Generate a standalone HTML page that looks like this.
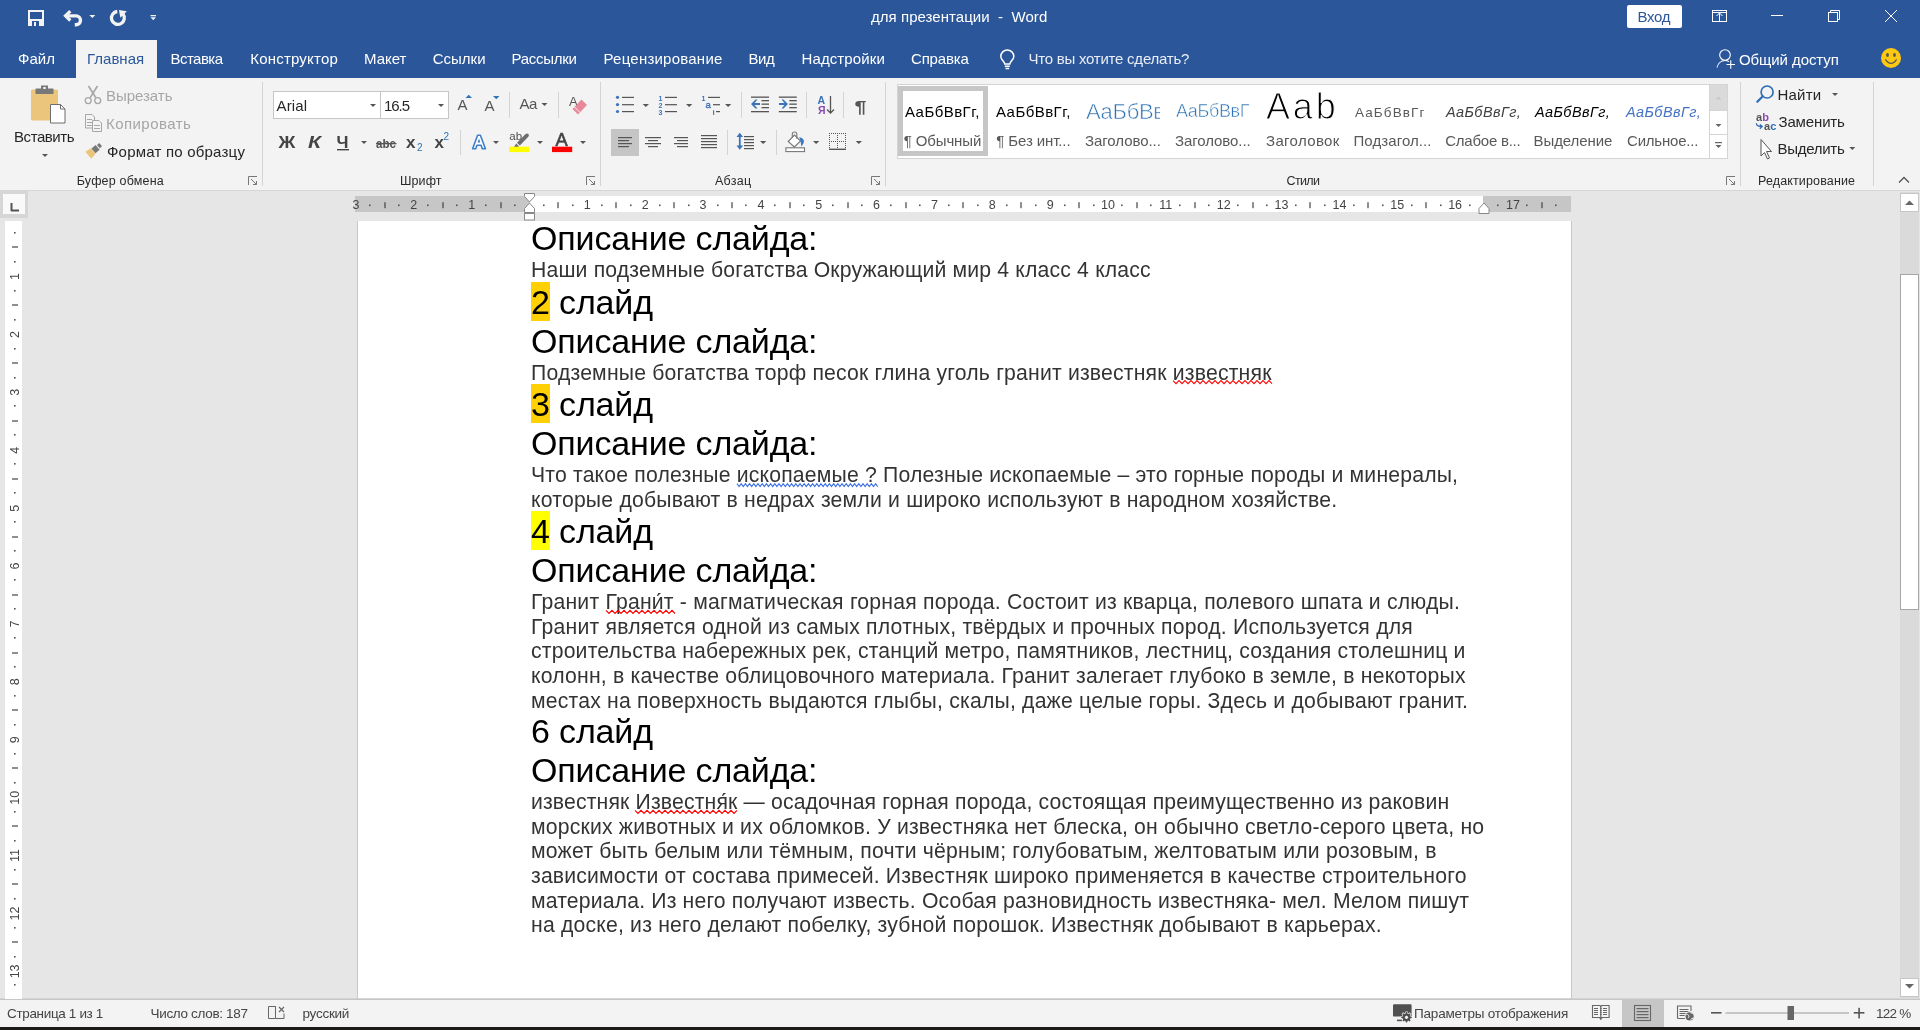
<!DOCTYPE html>
<html><head><meta charset="utf-8">
<style>
*{margin:0;padding:0;box-sizing:border-box}
html,body{width:1920px;height:1030px;overflow:hidden;background:#e6e6e6;font-family:"Liberation Sans",sans-serif}
.a{position:absolute;white-space:pre}
#title{left:0;top:0;width:1920px;height:40px;background:#2b579a}
#tabs{left:0;top:40px;width:1920px;height:38px;background:#2b579a}
#ribbon{left:0;top:78px;width:1920px;height:113px;background:#f3f3f3;border-bottom:1px solid #d5d5d5}
#status{left:0;top:998px;width:1920px;height:29px;background:#f3f3f3;border-top:1px solid #d4d4d4}
#strip{left:0;top:1027px;width:1920px;height:3px;background:#1c1a17}
#page{left:358px;top:221px;width:1213px;height:778px;background:#fff}
.h{font-size:34px;line-height:40px;left:531px;color:#000;letter-spacing:-0.15px}
.b{font-size:21.2px;line-height:25px;left:531px;color:#333}
u{text-decoration:none;position:relative}
u.wr{}
u.wb{}
</style></head><body>
<div class="a" id="title"></div>
<div class="a" id="tabs"></div>
<div class="a" id="ribbon"></div>
<div class="a" id="page"></div>
<div class="a" id="status"></div>
<div class="a" id="strip"></div>
<div class="a" style="left:0;top:0;width:1920px;height:1030px;will-change:transform">
<div class="a h" style="top:218px">Описание слайда:</div>
<div class="a b" id="L1" style="top:257px;letter-spacing:0.174px">Наши подземные богатства Окружающий мир 4 класс 4 класс</div>
<div class="a" style="left:531px;top:282px;width:19px;height:39px;background:#ffd105"></div>
<div class="a h" style="top:282px">2 слайд</div>
<div class="a h" style="top:321px">Описание слайда:</div>
<div class="a b" id="L4" style="top:360px;letter-spacing:0.191px">Подземные богатства торф песок глина уголь гранит известняк <u class="wr">известняк</u></div>
<div class="a" style="left:531px;top:384px;width:19px;height:39px;background:#ffd105"></div>
<div class="a h" style="top:384px">3 слайд</div>
<div class="a h" style="top:423px">Описание слайда:</div>
<div class="a b" id="L7" style="top:462px;letter-spacing:0.183px">Что такое полезные <u class="wb">ископаемые ?</u> Полезные ископаемые – это горные породы и минералы,</div>
<div class="a b" id="L8" style="top:487px;letter-spacing:0.203px">которые добывают в недрах земли и широко используют в народном хозяйстве.</div>
<div class="a" style="left:531px;top:511px;width:19px;height:39px;background:#ffff00"></div>
<div class="a h" style="top:511px">4 слайд</div>
<div class="a h" style="top:550px">Описание слайда:</div>
<div class="a b" id="L11" style="top:589px;letter-spacing:0.206px">Гранит <u class="wr">Грани́т</u> - магматическая горная порода. Состоит из кварца, полевого шпата и слюды.</div>
<div class="a b" id="L12" style="top:614px;letter-spacing:0.212px">Гранит является одной из самых плотных, твёрдых и прочных пород. Используется для</div>
<div class="a b" id="L13" style="top:638px;letter-spacing:0.186px">строительства набережных рек, станций метро, памятников, лестниц, создания столешниц и</div>
<div class="a b" id="L14" style="top:663px;letter-spacing:0.207px">колонн, в качестве облицовочного материала. Гранит залегает глубоко в земле, в некоторых</div>
<div class="a b" id="L15" style="top:688px;letter-spacing:0.204px">местах на поверхность выдаются глыбы, скалы, даже целые горы. Здесь и добывают гранит.</div>
<div class="a h" style="top:711px">6 слайд</div>
<div class="a h" style="top:750px">Описание слайда:</div>
<div class="a b" id="L18" style="top:789px;letter-spacing:0.159px">известняк <u class="wr">Известня́к</u> — осадочная горная порода, состоящая преимущественно из раковин</div>
<div class="a b" id="L19" style="top:814px;letter-spacing:0.191px">морских животных и их обломков. У известняка нет блеска, он обычно светло-серого цвета, но</div>
<div class="a b" id="L20" style="top:838px;letter-spacing:0.209px">может быть белым или тёмным, почти чёрным; голубоватым, желтоватым или розовым, в</div>
<div class="a b" id="L21" style="top:863px;letter-spacing:0.18px">зависимости от состава примесей. Известняк широко применяется в качестве строительного</div>
<div class="a b" id="L22" style="top:888px;letter-spacing:0.167px">материала. Из него получают известь. Особая разновидность известняка- мел. Мелом пишут</div>
<div class="a b" id="L23" style="top:912px;letter-spacing:0.195px">на доске, из него делают побелку, зубной порошок. Известняк добывают в карьерах.</div>
<svg class="a" style="left:0;top:0" width="1920" height="1030"><polyline points="1173.00,380.6 1176.00,383.6 1179.00,380.6 1182.00,383.6 1185.00,380.6 1188.00,383.6 1191.00,380.6 1194.00,383.6 1197.00,380.6 1200.00,383.6 1203.00,380.6 1206.00,383.6 1209.00,380.6 1212.00,383.6 1215.00,380.6 1218.00,383.6 1221.00,380.6 1224.00,383.6 1227.00,380.6 1230.00,383.6 1233.00,380.6 1236.00,383.6 1239.00,380.6 1242.00,383.6 1245.00,380.6 1248.00,383.6 1251.00,380.6 1254.00,383.6 1257.00,380.6 1260.00,383.6 1263.00,380.6 1266.00,383.6 1269.00,380.6 1272.00,383.6" fill="none" stroke="#f00" stroke-width="1.1"/><polyline points="737.00,483.6 739.10,486.6 741.20,483.6 743.30,486.6 745.40,483.6 747.50,486.6 749.60,483.6 751.70,486.6 753.80,483.6 755.90,486.6 758.00,483.6 760.10,486.6 762.20,483.6 764.30,486.6 766.40,483.6 768.50,486.6 770.60,483.6 772.70,486.6 774.80,483.6 776.90,486.6 779.00,483.6 781.10,486.6 783.20,483.6 785.30,486.6 787.40,483.6 789.50,486.6 791.60,483.6 793.70,486.6 795.80,483.6 797.90,486.6 800.00,483.6 802.10,486.6 804.20,483.6 806.30,486.6 808.40,483.6 810.50,486.6 812.60,483.6 814.70,486.6 816.80,483.6 818.90,486.6 821.00,483.6 823.10,486.6 825.20,483.6 827.30,486.6 829.40,483.6 831.50,486.6 833.60,483.6 835.70,486.6 837.80,483.6 839.90,486.6 842.00,483.6 844.10,486.6 846.20,483.6 848.30,486.6 850.40,483.6 852.50,486.6 854.60,483.6 856.70,486.6 858.80,483.6 860.90,486.6 863.00,483.6 865.10,486.6 867.20,483.6 869.30,486.6 871.40,483.6 873.50,486.6 875.60,483.6 877.70,486.6" fill="none" stroke="#3b6fe6" stroke-width="1.1"/><polyline points="606.00,610.3 609.00,613.5 612.00,610.3 615.00,613.5 618.00,610.3 621.00,613.5 624.00,610.3 627.00,613.5 630.00,610.3 633.00,613.5 636.00,610.3 639.00,613.5 642.00,610.3 645.00,613.5 648.00,610.3 651.00,613.5 654.00,610.3 657.00,613.5 660.00,610.3 663.00,613.5 666.00,610.3 669.00,613.5 672.00,610.3 675.00,613.5" fill="none" stroke="#f00" stroke-width="1.1"/><polyline points="635.00,810.3 638.00,813.5 641.00,810.3 644.00,813.5 647.00,810.3 650.00,813.5 653.00,810.3 656.00,813.5 659.00,810.3 662.00,813.5 665.00,810.3 668.00,813.5 671.00,810.3 674.00,813.5 677.00,810.3 680.00,813.5 683.00,810.3 686.00,813.5 689.00,810.3 692.00,813.5 695.00,810.3 698.00,813.5 701.00,810.3 704.00,813.5 707.00,810.3 710.00,813.5 713.00,810.3 716.00,813.5 719.00,810.3 722.00,813.5 725.00,810.3 728.00,813.5 731.00,810.3 734.00,813.5 737.00,810.3" fill="none" stroke="#f00" stroke-width="1.1"/></svg>
</div>
<div class="a" style="left:0;top:0;width:1920px;height:1030px;will-change:transform">
<!-- active tab -->
<div class="a" style="left:76px;top:40px;width:81px;height:38px;background:#f3f3f3"></div>
<!-- ribbon bottom border -->
<div class="a" style="left:0;top:190px;width:1920px;height:1px;background:#d6d6d6"></div>
<!-- status bar border -->
<div class="a" style="left:0;top:999px;width:1920px;height:1px;background:#c6c6c6"></div>
<!-- QAT icons -->
<svg class="a" style="left:0;top:0" width="200" height="40">
 <g fill="#f3f3f3">
  <path d="M28 10h16v16h-16z M30 12v7h12v-7z M32 21v5h7v-5z M34 22v4h2v-4z" fill-rule="evenodd"/>
 </g>
 <path d="M66.5 15.85H76A4.45 4.45 0 0 1 76 24.75H74.8" stroke="#f3f3f3" stroke-width="3.4" fill="none"/>
 <path d="M70.3 11.2L65.5 15.85L70.3 20.5" stroke="#f3f3f3" stroke-width="3.2" fill="none"/>
 <path d="M89.3 15h6l-3 3z" fill="#f3f3f3"/>
 <path d="M117.3 11.5A6.45 6.45 0 1 0 122.84 13.8" stroke="#f3f3f3" stroke-width="3.3" fill="none"/>
 <path d="M119 10L126.8 11.2L120.3 17.8Z" fill="#f3f3f3"/>
 <path d="M150.5 15h5.5v1.2h-5.5z M150.5 17.3h5.5l-2.75 3z" fill="#f3f3f3"/>
</svg>
<!-- Vhod button -->
<div class="a" style="left:1627px;top:5px;width:55px;height:23px;background:#fff;border-radius:2px"></div>
<!-- window controls -->
<svg class="a" style="left:1700px;top:0" width="220" height="40">
 <g fill="none" stroke="#fff" stroke-width="1">
  <rect x="12.5" y="10.5" width="14" height="11"/>
  <path d="M13 12.5h13"/>
  <path d="M19.5 13v8 M16.5 16l3-3 3 3"/>
  <path d="M71 15.5h12"/>
  <rect x="128.5" y="12.5" width="9" height="9"/>
  <path d="M130.5 12.5v-2h9v9h-2"/>
  <path d="M185 10l12 12 M197 10l-12 12"/>
 </g>
</svg>
<!-- share icon & smiley -->
<svg class="a" style="left:1710px;top:42px" width="210" height="36">
 <g fill="none" stroke="#fff" stroke-width="1.1">
  <circle cx="15" cy="13" r="5.3"/>
  <path d="M7 25.5 C8 21 11.5 18.5 15 18.5 C16.5 18.5 18 19 19 19.6"/>
  <path d="M16.5 22.5h8.5 M20.75 18.3v8.5"/>
 </g>
 <circle cx="181" cy="16" r="10" fill="#fcc812"/>
 <ellipse cx="177.5" cy="13" rx="1.4" ry="2" fill="#555"/>
 <ellipse cx="184.5" cy="13" rx="1.4" ry="2" fill="#555"/>
 <path d="M175.4 17.3 Q181 25.4 186.6 17.3" stroke="#555" stroke-width="1.2" fill="none"/>
</svg>
<!-- lightbulb -->
<svg class="a" style="left:995px;top:46px" width="26" height="28">
 <g fill="none" stroke="#fff" stroke-width="1.5">
  <path d="M9.8 18 C9.8 15.3 5.8 13.8 5.8 10.5 A6.5 6.5 0 0 1 18.8 10.5 C18.8 13.8 14.8 15.3 14.8 18 Z"/>
  <path d="M9.8 20.3h5 M10.5 22.4h3.6"/>
 </g>
</svg>

<!-- group separators -->
<div class="a" style="left:262px;top:82px;width:1px;height:104px;background:#d4d4d4"></div>
<div class="a" style="left:600px;top:82px;width:1px;height:104px;background:#d4d4d4"></div>
<div class="a" style="left:885px;top:82px;width:1px;height:104px;background:#d4d4d4"></div>
<div class="a" style="left:1740px;top:82px;width:1px;height:104px;background:#d4d4d4"></div>
<div class="a" style="left:1873px;top:82px;width:1px;height:104px;background:#d4d4d4"></div>
<!-- dialog launchers -->
<svg class="a" style="left:0;top:170px" width="1920" height="20">
 <g fill="none" stroke="#777" stroke-width="1">
  <path d="M248.5 15V6.5H257"/><path d="M251 9l5.5 5.5 M256.5 11v3.5H253"/>
  <path d="M586.5 15V6.5H595"/><path d="M589 9l5.5 5.5 M594.5 11v3.5H591"/>
  <path d="M871.5 15V6.5H880"/><path d="M874 9l5.5 5.5 M879.5 11v3.5H876"/>
  <path d="M1726.5 15V6.5H1735"/><path d="M1729 9l5.5 5.5 M1734.5 11v3.5H1731"/>
  <path d="M1899 12.5l5-5 5 5" stroke="#555" stroke-width="1.3"/>
 </g>
</svg>
<!-- clipboard icons -->
<svg class="a" style="left:0;top:78px" width="262" height="100">
 <rect x="31" y="11.5" width="27" height="31" rx="1.5" fill="#ebc57b"/>
 <rect x="35.5" y="10.5" width="18" height="5.5" rx="0.5" fill="#787878"/>
 <rect x="41" y="7.5" width="7" height="4" fill="#787878"/>
 <rect x="43.3" y="9" width="2.4" height="2" fill="#f3f3f3"/>
 <path d="M50.5 26.5h10l4.5 4.5v14h-14.5z" fill="#fff" stroke="#6d6d6d" stroke-width="1"/>
 <path d="M60.5 26.5v4.5h4.5" fill="none" stroke="#6d6d6d" stroke-width="1"/>
 <path d="M42 76l3 3 3-3z" fill="#555"/>
 <!-- scissors -->
 <g fill="none" stroke="#a6a6a6">
  <path d="M88.5 8 L95.8 19.6 M97.5 8 L90.2 19.6" stroke-width="1.7"/>
  <circle cx="88.2" cy="22.6" r="3" stroke-width="1.3"/><circle cx="97.7" cy="22.6" r="3" stroke-width="1.3"/>
 </g>
 <!-- copy -->
 <g fill="#f3f3f3" stroke="#a6a6a6" stroke-width="1">
  <path d="M85.5 36.5h6.5l2.5 2.5v11h-9z"/>
  <path d="M92.5 42.5h6.5l2.5 2.5v8.5h-9z"/>
 </g>
 <g stroke="#a6a6a6" stroke-width="1"><path d="M87 41.5h5 M87 44.5h5 M87 47.5h5 M94 47.5h6 M94 50.5h6"/></g>
 <!-- format painter -->
 <path d="M85.32 73.69 L90.92 70.24 L95.59 75.73 L91.28 80.71 Z" fill="#ebc57b"/>
 <path d="M91.47 70.43 L95.59 66.93 L99.61 71.66 L95.49 75.16 Z" fill="#787878"/>
 <path d="M97.00 67.05 L99.28 65.10 L102.01 68.30 L99.72 70.25 Z" fill="#787878"/>
</svg>
<!-- font boxes -->
<div class="a" style="left:273px;top:91px;width:108px;height:28px;background:#fff;border:1px solid #c6c6c6"></div>
<div class="a" style="left:380px;top:91px;width:69px;height:28px;background:#fff;border:1px solid #c6c6c6"></div>
<svg class="a" style="left:265px;top:78px" width="340" height="100">
 <g fill="#555">
  <path d="M105 26h6l-3 3z"/><path d="M173 26h6l-3 3z"/>
  <path d="M96 63h6l-3 3z"/>
  <path d="M228 63h6l-3 3z"/><path d="M272 63h6l-3 3z"/><path d="M315 63h6l-3 3z"/>
  <path d="M276.5 25h6l-3 3z"/>
 </g>
 <!-- B I U -->
 <g transform="translate(-265,-78)" font-family="Liberation Sans" font-weight="bold" fill="#444">
  <text x="278.6" y="148" font-size="17" textLength="16.8" lengthAdjust="spacingAndGlyphs">Ж</text>
  <text x="308" y="148" font-size="17" font-style="italic" textLength="13" lengthAdjust="spacingAndGlyphs">К</text>
  <text x="336.6" y="148" font-size="17" textLength="12" lengthAdjust="spacingAndGlyphs">Ч</text>
  <text x="376" y="148" font-size="12.5" fill="#555" textLength="20" lengthAdjust="spacingAndGlyphs">abc</text>
  <text x="406" y="148" font-size="17">x</text>
  <text x="434.4" y="148" font-size="17">x</text>
  <text x="417" y="150.6" font-size="10" font-weight="normal" fill="#2e75b6">2</text>
  <text x="443.5" y="139.8" font-size="10" font-weight="normal" fill="#2e75b6">2</text>
 </g>
 <rect x="72" y="71" width="12" height="1.4" fill="#444"/>
 <rect x="111" y="65" width="20.5" height="1.3" fill="#555"/>
 <rect x="195" y="52" width="1" height="25" fill="#d4d4d4"/>
 <!-- grow/shrink -->
 <text x="457.5" y="110.2" transform="translate(-265,-78)" font-family="Liberation Sans" font-size="15" fill="#555">A</text>
 <path d="M200.5 20h6.5l-3.25-3.2z" fill="#2e75b6"/>
 <text x="484.5" y="111.2" transform="translate(-265,-78)" font-family="Liberation Sans" font-size="15" fill="#555">A</text>
 <path d="M228 18h6.5l-3.25 3.2z" fill="#2e75b6"/>
 <rect x="244" y="14" width="1" height="26" fill="#d4d4d4"/>
 <text x="519.5" y="109" transform="translate(-265,-78)" font-family="Liberation Sans" font-size="15" fill="#555" letter-spacing="-0.5">Aa</text>
 <rect x="293" y="14" width="1" height="26" fill="#d4d4d4"/>
 <!-- clear formatting -->
 <text x="569" y="105.6" transform="translate(-265,-78)" font-family="Liberation Sans" font-size="13" fill="#555">A</text>
 <path d="M307.5 31 L316.5 21.5 L322 27 L313 36.5 Z" fill="#e8899a"/>
 <path d="M309.5 29 L315 34.5" stroke="#f3f3f3" stroke-width="1"/>
 <!-- text effects -->
 <g transform="translate(-265,-78)"><path d="M472.6 148.8 L477.6 135.3 L480.4 135.3 L485.4 148.8 L482.3 148.8 L481.1 145.2 L476.9 145.2 L475.7 148.8 Z" fill="#fff" stroke="#3f7fc7" stroke-width="1.6" stroke-linejoin="round"/><path d="M477.6 142.6 L479 138.4 L480.4 142.6 Z" fill="#3f7fc7"/></g>
 <!-- highlighter -->
 <text x="509.3" y="139.8" transform="translate(-265,-78)" font-family="Liberation Sans" font-size="11.5" fill="#505050">ab</text>
 <path d="M252 64.8 L260.6 56 Q262.2 54.8 263.4 56 Q264.5 57.3 263.3 58.7 L254.8 67.6 Z" fill="#6d6d6d"/><path d="M251.2 65.6 L254 68.4 L250.5 70.3 L248.2 70.3 Z" fill="#6d6d6d"/>
 <rect x="244" y="68.7" width="20" height="5.4" fill="#ffff00"/>
 <!-- font color -->
 <text x="555.6" y="145.8" transform="translate(-265,-78)" font-family="Liberation Sans" font-size="18" fill="#444" stroke="#444" stroke-width="0.6" textLength="12.2" lengthAdjust="spacingAndGlyphs">A</text>
 <rect x="287" y="68.7" width="20.2" height="5.4" fill="#ff0000"/>
</svg>

<!-- paragraph group -->
<svg class="a" style="left:600px;top:78px" width="285" height="100">
 <g fill="#3b73b9">
  <circle cx="617.5" cy="97.3" r="1.6" transform="translate(-600,-78)"/>
  <circle cx="617.5" cy="104.6" r="1.6" transform="translate(-600,-78)"/>
  <circle cx="617.5" cy="111.5" r="1.6" transform="translate(-600,-78)"/>
 </g>
 <g fill="#555">
  <rect x="22" y="18.8" width="12" height="1.2"/><rect x="22" y="26.1" width="12" height="1.2"/><rect x="22" y="33" width="12" height="1.2"/>
  <rect x="65" y="18.8" width="12" height="1.2"/><rect x="65" y="26.1" width="12" height="1.2"/><rect x="65" y="33" width="12" height="1.2"/>
  <rect x="108" y="18.8" width="12" height="1.2"/><rect x="113" y="26.1" width="7" height="1.2"/><rect x="116" y="33" width="4" height="1.2"/>
  <path d="M42.7 26h6.3l-3.15 3z"/><path d="M86 26h6.3l-3.15 3z"/><path d="M125 26h6.3l-3.15 3z"/>
 </g>
 <g font-family="Liberation Sans" font-weight="bold" fill="#3b73b9">
  <text x="58.5" y="22.5" font-size="7">1</text><text x="58.5" y="29.8" font-size="7">2</text><text x="58.5" y="36.8" font-size="7">3</text>
  <text x="101.5" y="22.5" font-size="7">1</text><text x="105.6" y="30" font-size="9.5" font-weight="normal" stroke="#3b73b9" stroke-width="0.4">a</text><text x="112.4" y="36.8" font-size="8">i</text>
 </g>
 <rect x="141" y="14" width="1" height="26" fill="#d4d4d4"/>
 <!-- indent -->
 <g fill="#555">
  <rect x="151" y="18.5" width="18" height="1.3"/><rect x="161.5" y="22" width="7.5" height="1.3"/><rect x="161.5" y="25.5" width="7.5" height="1.3"/><rect x="161.5" y="29" width="7.5" height="1.3"/><rect x="151" y="33" width="18" height="1.3"/>
  <rect x="178.8" y="18.5" width="18" height="1.3"/><rect x="189.3" y="22" width="7.5" height="1.3"/><rect x="189.3" y="25.5" width="7.5" height="1.3"/><rect x="189.3" y="29" width="7.5" height="1.3"/><rect x="178.8" y="33" width="18" height="1.3"/>
 </g>
 <path d="M151 26 L155.5 21.5 L157.5 21.5 L154.5 25 L160 25 L160 27 L154.5 27 L157.5 30.5 L155.5 30.5 Z" fill="#3b73b9"/>
 <path d="M188 26 L183.5 21.5 L181.5 21.5 L184.5 25 L179 25 L179 27 L184.5 27 L181.5 30.5 L183.5 30.5 Z" fill="#3b73b9"/>
 <rect x="206" y="14" width="1" height="26" fill="#d4d4d4"/>
 <!-- sort -->
 <text x="217.5" y="25.7" font-family="Liberation Sans" font-weight="bold" font-size="10.5" fill="#3b73b9">A</text>
 <text x="218" y="35.6" font-family="Liberation Sans" font-weight="bold" font-size="10.5" fill="#8a4ab2">Я</text>
 <path d="M230.5 18v17 M227 31.5l3.5 3.5 3.5-3.5" stroke="#555" stroke-width="1.3" fill="none"/>
 <rect x="243" y="14" width="1" height="26" fill="#d4d4d4"/>
 <!-- pilcrow -->
 <text x="854.5" y="112.5" transform="translate(-600,-78)" font-family="Liberation Sans" font-weight="bold" font-size="17" fill="#555" textLength="12" lengthAdjust="spacingAndGlyphs">¶</text>
 <!-- align buttons -->
 <rect x="11" y="51" width="28" height="27" fill="#c5c5c5"/>
 <g fill="#555">
  <rect x="18" y="59" width="14" height="1.2"/><rect x="18" y="62" width="11" height="1.2"/><rect x="18" y="65" width="14" height="1.2"/><rect x="18" y="68" width="11" height="1.2"/>
  <rect x="45" y="59" width="16" height="1.2"/><rect x="48" y="62" width="10" height="1.2"/><rect x="45" y="65" width="16" height="1.2"/><rect x="48" y="68" width="10" height="1.2"/>
  <rect x="74" y="59" width="14" height="1.2"/><rect x="77" y="62" width="11" height="1.2"/><rect x="74" y="65" width="14" height="1.2"/><rect x="77" y="68" width="11" height="1.2"/>
  <rect x="101" y="57" width="16" height="1.2"/><rect x="101" y="60" width="16" height="1.2"/><rect x="101" y="63" width="16" height="1.2"/><rect x="101" y="66" width="16" height="1.2"/><rect x="101" y="69" width="16" height="1.2"/>
 </g>
 <rect x="127" y="52" width="1" height="25" fill="#d4d4d4"/>
 <!-- line spacing -->
 <g fill="#555"><rect x="144" y="58" width="10" height="1.2"/><rect x="144" y="61" width="10" height="1.2"/><rect x="144" y="64" width="10" height="1.2"/><rect x="144" y="67" width="10" height="1.2"/><rect x="144" y="70" width="10" height="1.2"/></g>
 <path d="M139.8 56v14" stroke="#3b73b9" stroke-width="1.8"/>
 <path d="M136.5 59l3.3-4.3 3.3 4.3z M136.5 67.5l3.3 4.3 3.3-4.3z" fill="#3b73b9"/>
 <path d="M160 63h6.3l-3.15 3z" fill="#555"/>
 <rect x="176" y="52" width="1" height="25" fill="#d4d4d4"/>
 <!-- shading -->
 <path d="M188.2 63.5 L194.5 57.1 L200.6 63 L194.3 68.9 Z" fill="#fff" stroke="#777" stroke-width="1.1"/>
 <path d="M192.3 59.5V56Q192.3 54 194.6 54Q196.8 54 196.8 56V60.8" fill="none" stroke="#777" stroke-width="1.1"/>
 <path d="M199.3 59Q204.5 60.5 203.9 64Q203.2 66.8 201.4 68.4L200.6 63.2Z" fill="#3b78c4"/>
 <rect x="185.9" y="69.8" width="18.6" height="3.8" fill="#fff" stroke="#777" stroke-width="1.1"/>
 <path d="M213 63h6.3l-3.15 3z" fill="#555"/>
 <!-- borders -->
 <g fill="none" stroke="#555" stroke-width="1" stroke-dasharray="1 1">
  <path d="M229 55.5h17 M229 63.5h17 M229.5 57v13 M237.5 57v13 M245.5 57v13"/>
 </g>
 <rect x="229" y="70.6" width="17" height="1.4" fill="#555"/>
 <path d="M255.7 63h6.3l-3.15 3z" fill="#555"/>
</svg>

<!-- styles gallery -->
<div class="a" style="left:897px;top:84px;width:831px;height:75px;background:#fff;border:1px solid #d4d4d4"></div>
<div class="a" style="left:898px;top:86px;width:90px;height:70px;border:5px solid #c6c6c6"></div>
<div class="a" style="left:1709px;top:84px;width:19px;height:75px;border:1px solid #d4d4d4;background:#fff"></div>
<div class="a" style="left:1710px;top:85px;width:17px;height:25px;background:#dadada"></div>
<div class="a" style="left:1709px;top:110px;width:19px;height:1px;background:#d4d4d4"></div>
<div class="a" style="left:1709px;top:134px;width:19px;height:1px;background:#d4d4d4"></div>
<svg class="a" style="left:1709px;top:84px" width="19" height="75">
 <path d="M6.5 15.5h6l-3-3z" fill="#c8c8c8"/>
 <path d="M6.5 40h6l-3 3z" fill="#666"/>
 <rect x="6" y="58" width="7" height="1.2" fill="#666"/>
 <path d="M6.5 61h6l-3 3z" fill="#666"/>
</svg>
<div class="a" style="left:904px;top:92px;width:76px;height:30px;overflow:hidden">
 <div class="a" style="left:1px;top:11px;font-size:15px;line-height:17px;color:#000;letter-spacing:0.45px">АаБбВвГг,</div>
</div>
<div class="a" style="left:995px;top:92px;width:75px;height:30px;overflow:hidden">
 <div class="a" style="left:1px;top:11px;font-size:15px;line-height:17px;color:#000;letter-spacing:0.45px">АаБбВвГг,</div>
</div>
<div class="a" style="left:1085px;top:88px;width:75px;height:40px;overflow:hidden">
 <div class="a" style="left:1px;top:11px;font-size:22px;line-height:25px;color:#2e74b5;letter-spacing:-0.3px;-webkit-text-stroke:0.6px #fff">АаБбВв</div>
</div>
<div class="a" style="left:1175px;top:88px;width:75px;height:40px;overflow:hidden">
 <div class="a" style="left:1px;top:13px;font-size:18px;line-height:21px;color:#2e74b5;letter-spacing:-0.35px;-webkit-text-stroke:0.5px #fff">АаБбВвГг</div>
</div>
<div class="a" style="left:1264px;top:84px;width:80px;height:44px;overflow:hidden">
 <div class="a" style="left:2px;top:2px;font-size:36px;line-height:41px;color:#000;letter-spacing:2.8px;-webkit-text-stroke:1.1px #fff">Aab</div>
</div>
<div class="a" style="left:1354px;top:92px;width:76px;height:30px;overflow:hidden">
 <div class="a" style="left:1px;top:13px;font-size:13.5px;line-height:16px;color:#5a5a5a;letter-spacing:1.1px">АаБбВвГг</div>
</div>
<div class="a" style="left:1445px;top:92px;width:76px;height:30px;overflow:hidden">
 <div class="a" style="left:1px;top:12px;font-size:14.5px;line-height:17px;color:#404040;font-style:italic;letter-spacing:0.4px">АаБбВвГг,</div>
</div>
<div class="a" style="left:1534px;top:92px;width:78px;height:30px;overflow:hidden">
 <div class="a" style="left:1px;top:12px;font-size:14.5px;line-height:17px;color:#000;font-style:italic;letter-spacing:0.4px">АаБбВвГг,</div>
</div>
<div class="a" style="left:1625px;top:92px;width:76px;height:30px;overflow:hidden">
 <div class="a" style="left:1px;top:12px;font-size:14.5px;line-height:17px;color:#4472c4;font-style:italic;letter-spacing:0.4px">АаБбВвГг,</div>
</div>
<!-- editing icons -->
<svg class="a" style="left:1750px;top:80px" width="120" height="80">
 <circle cx="17.1" cy="12" r="6" fill="none" stroke="#2e6eb5" stroke-width="1.7"/>
 <path d="M12.8 16.3 L7.3 21.8" stroke="#2e6eb5" stroke-width="2.2" stroke-linecap="round"/>
 <path d="M82 13h6l-3 3z" fill="#555"/>
 <text x="6" y="40.8" font-family="Liberation Sans" font-weight="bold" font-size="11" fill="#555">a</text>
 <text x="12.2" y="40.8" font-family="Liberation Sans" font-weight="bold" font-size="11" fill="#8a4ab2">b</text>
 <text x="14" y="49.8" font-family="Liberation Sans" font-weight="bold" font-size="11" fill="#555">a</text>
 <text x="20.3" y="49.8" font-family="Liberation Sans" font-weight="bold" font-size="11" fill="#2e6eb5">c</text>
 <path d="M6.3 43.2 Q6.5 46.6 12 46.6 M9.8 44.4 L12.2 46.6 L9.8 48.8" fill="none" stroke="#2e6eb5" stroke-width="1.3"/>
 <path d="M11 59.5 L11 76 L14.5 72.5 L17.5 79 L19.5 78 L16.5 71.5 L21.5 71.5 Z" fill="#fff" stroke="#555" stroke-width="1"/>
 <path d="M99.3 67h6l-3 3z" fill="#555"/>
</svg>

<div class="a" style="left:0;top:191px;width:28px;height:27px;background:#d6d6d6"></div>
<div class="a" style="left:3px;top:194px;width:22px;height:20px;background:#f9f9f9"></div>
<svg class="a" style="left:0;top:190px" width="30" height="30"><path d="M11.5 13v8 M11 20.5h8" stroke="#555" stroke-width="2" fill="none"/></svg>
<div class="a" style="left:357px;top:221px;width:1px;height:778px;background:#c8c8c8"></div>
<div class="a" style="left:1571px;top:221px;width:1px;height:778px;background:#c8c8c8"></div>
<div class="a" style="left:355px;top:196px;width:1216px;height:16px;background:#c6c6c6"></div>
<div class="a" style="left:530px;top:196px;width:953px;height:16px;background:#fff"></div>
<svg class="a" style="left:0;top:190px" width="1920" height="32"><text x="355.95" y="19.1" text-anchor="middle" font-family="Liberation Sans" font-size="12.5" fill="#444">3</text><rect x="369" y="14.5" width="1.6" height="1.6" fill="#555"/><rect x="384.40" y="12.2" width="1.2" height="6" fill="#444"/><rect x="398" y="14.5" width="1.6" height="1.6" fill="#555"/><text x="413.80" y="19.1" text-anchor="middle" font-family="Liberation Sans" font-size="12.5" fill="#444">2</text><rect x="427" y="14.5" width="1.6" height="1.6" fill="#555"/><rect x="442.40" y="12.2" width="1.2" height="6" fill="#444"/><rect x="456" y="14.5" width="1.6" height="1.6" fill="#555"/><text x="471.65" y="19.1" text-anchor="middle" font-family="Liberation Sans" font-size="12.5" fill="#444">1</text><rect x="485" y="14.5" width="1.6" height="1.6" fill="#555"/><rect x="500.40" y="12.2" width="1.2" height="6" fill="#444"/><rect x="514" y="14.5" width="1.6" height="1.6" fill="#555"/><rect x="543" y="14.5" width="1.6" height="1.6" fill="#555"/><rect x="557.40" y="12.2" width="1.2" height="6" fill="#444"/><rect x="572" y="14.5" width="1.6" height="1.6" fill="#555"/><text x="587.35" y="19.1" text-anchor="middle" font-family="Liberation Sans" font-size="12.5" fill="#444">1</text><rect x="601" y="14.5" width="1.6" height="1.6" fill="#555"/><rect x="615.40" y="12.2" width="1.2" height="6" fill="#444"/><rect x="630" y="14.5" width="1.6" height="1.6" fill="#555"/><text x="645.20" y="19.1" text-anchor="middle" font-family="Liberation Sans" font-size="12.5" fill="#444">2</text><rect x="659" y="14.5" width="1.6" height="1.6" fill="#555"/><rect x="673.40" y="12.2" width="1.2" height="6" fill="#444"/><rect x="688" y="14.5" width="1.6" height="1.6" fill="#555"/><text x="703.05" y="19.1" text-anchor="middle" font-family="Liberation Sans" font-size="12.5" fill="#444">3</text><rect x="717" y="14.5" width="1.6" height="1.6" fill="#555"/><rect x="731.40" y="12.2" width="1.2" height="6" fill="#444"/><rect x="745" y="14.5" width="1.6" height="1.6" fill="#555"/><text x="760.90" y="19.1" text-anchor="middle" font-family="Liberation Sans" font-size="12.5" fill="#444">4</text><rect x="774" y="14.5" width="1.6" height="1.6" fill="#555"/><rect x="789.40" y="12.2" width="1.2" height="6" fill="#444"/><rect x="803" y="14.5" width="1.6" height="1.6" fill="#555"/><text x="818.75" y="19.1" text-anchor="middle" font-family="Liberation Sans" font-size="12.5" fill="#444">5</text><rect x="832" y="14.5" width="1.6" height="1.6" fill="#555"/><rect x="847.40" y="12.2" width="1.2" height="6" fill="#444"/><rect x="861" y="14.5" width="1.6" height="1.6" fill="#555"/><text x="876.60" y="19.1" text-anchor="middle" font-family="Liberation Sans" font-size="12.5" fill="#444">6</text><rect x="890" y="14.5" width="1.6" height="1.6" fill="#555"/><rect x="905.40" y="12.2" width="1.2" height="6" fill="#444"/><rect x="919" y="14.5" width="1.6" height="1.6" fill="#555"/><text x="934.45" y="19.1" text-anchor="middle" font-family="Liberation Sans" font-size="12.5" fill="#444">7</text><rect x="948" y="14.5" width="1.6" height="1.6" fill="#555"/><rect x="962.40" y="12.2" width="1.2" height="6" fill="#444"/><rect x="977" y="14.5" width="1.6" height="1.6" fill="#555"/><text x="992.30" y="19.1" text-anchor="middle" font-family="Liberation Sans" font-size="12.5" fill="#444">8</text><rect x="1006" y="14.5" width="1.6" height="1.6" fill="#555"/><rect x="1020.40" y="12.2" width="1.2" height="6" fill="#444"/><rect x="1035" y="14.5" width="1.6" height="1.6" fill="#555"/><text x="1050.15" y="19.1" text-anchor="middle" font-family="Liberation Sans" font-size="12.5" fill="#444">9</text><rect x="1064" y="14.5" width="1.6" height="1.6" fill="#555"/><rect x="1078.40" y="12.2" width="1.2" height="6" fill="#444"/><rect x="1093" y="14.5" width="1.6" height="1.6" fill="#555"/><text x="1108.00" y="19.1" text-anchor="middle" font-family="Liberation Sans" font-size="12.5" fill="#444">10</text><rect x="1121" y="14.5" width="1.6" height="1.6" fill="#555"/><rect x="1136.40" y="12.2" width="1.2" height="6" fill="#444"/><rect x="1150" y="14.5" width="1.6" height="1.6" fill="#555"/><text x="1165.85" y="19.1" text-anchor="middle" font-family="Liberation Sans" font-size="12.5" fill="#444">11</text><rect x="1179" y="14.5" width="1.6" height="1.6" fill="#555"/><rect x="1194.40" y="12.2" width="1.2" height="6" fill="#444"/><rect x="1208" y="14.5" width="1.6" height="1.6" fill="#555"/><text x="1223.70" y="19.1" text-anchor="middle" font-family="Liberation Sans" font-size="12.5" fill="#444">12</text><rect x="1237" y="14.5" width="1.6" height="1.6" fill="#555"/><rect x="1252.40" y="12.2" width="1.2" height="6" fill="#444"/><rect x="1266" y="14.5" width="1.6" height="1.6" fill="#555"/><text x="1281.55" y="19.1" text-anchor="middle" font-family="Liberation Sans" font-size="12.5" fill="#444">13</text><rect x="1295" y="14.5" width="1.6" height="1.6" fill="#555"/><rect x="1309.40" y="12.2" width="1.2" height="6" fill="#444"/><rect x="1324" y="14.5" width="1.6" height="1.6" fill="#555"/><text x="1339.40" y="19.1" text-anchor="middle" font-family="Liberation Sans" font-size="12.5" fill="#444">14</text><rect x="1353" y="14.5" width="1.6" height="1.6" fill="#555"/><rect x="1367.40" y="12.2" width="1.2" height="6" fill="#444"/><rect x="1382" y="14.5" width="1.6" height="1.6" fill="#555"/><text x="1397.25" y="19.1" text-anchor="middle" font-family="Liberation Sans" font-size="12.5" fill="#444">15</text><rect x="1411" y="14.5" width="1.6" height="1.6" fill="#555"/><rect x="1425.40" y="12.2" width="1.2" height="6" fill="#444"/><rect x="1440" y="14.5" width="1.6" height="1.6" fill="#555"/><text x="1455.10" y="19.1" text-anchor="middle" font-family="Liberation Sans" font-size="12.5" fill="#444">16</text><rect x="1469" y="14.5" width="1.6" height="1.6" fill="#555"/><rect x="1497" y="14.5" width="1.6" height="1.6" fill="#555"/><text x="1512.95" y="19.1" text-anchor="middle" font-family="Liberation Sans" font-size="12.5" fill="#444">17</text><rect x="1526" y="14.5" width="1.6" height="1.6" fill="#555"/><rect x="1541.40" y="12.2" width="1.2" height="6" fill="#444"/><rect x="1555" y="14.5" width="1.6" height="1.6" fill="#555"/><path d="M524.5 3.5h10v3l-5 5.5-5-5.5z" fill="#fff" stroke="#888" stroke-width="1"/><path d="M529.5 13l5 5.5v4h-10v-4z" fill="#fff" stroke="#888" stroke-width="1"/><rect x="524.5" y="23.5" width="10" height="6.5" fill="#fff" stroke="#888" stroke-width="1"/><path d="M1484 13l5 5.5v5h-10v-5z" fill="#fff" stroke="#888" stroke-width="1"/></svg>
<div class="a" style="left:5px;top:221px;width:17px;height:778px;background:#fff"></div>
<svg class="a" style="left:0;top:0" width="30" height="1000"><rect x="14" y="232" width="1.6" height="1.6" fill="#555"/><rect x="12" y="246.40" width="6" height="1.2" fill="#444"/><rect x="14" y="261" width="1.6" height="1.6" fill="#555"/><text x="0" y="0" transform="translate(19.3 276.60) rotate(-90)" text-anchor="middle" font-family="Liberation Sans" font-size="12.5" fill="#444">1</text><rect x="14" y="290" width="1.6" height="1.6" fill="#555"/><rect x="12" y="304.40" width="6" height="1.2" fill="#444"/><rect x="14" y="319" width="1.6" height="1.6" fill="#555"/><text x="0" y="0" transform="translate(19.3 334.50) rotate(-90)" text-anchor="middle" font-family="Liberation Sans" font-size="12.5" fill="#444">2</text><rect x="14" y="348" width="1.6" height="1.6" fill="#555"/><rect x="12" y="362.40" width="6" height="1.2" fill="#444"/><rect x="14" y="377" width="1.6" height="1.6" fill="#555"/><text x="0" y="0" transform="translate(19.3 392.40) rotate(-90)" text-anchor="middle" font-family="Liberation Sans" font-size="12.5" fill="#444">3</text><rect x="14" y="405" width="1.6" height="1.6" fill="#555"/><rect x="12" y="420.40" width="6" height="1.2" fill="#444"/><rect x="14" y="434" width="1.6" height="1.6" fill="#555"/><text x="0" y="0" transform="translate(19.3 450.30) rotate(-90)" text-anchor="middle" font-family="Liberation Sans" font-size="12.5" fill="#444">4</text><rect x="14" y="463" width="1.6" height="1.6" fill="#555"/><rect x="12" y="478.40" width="6" height="1.2" fill="#444"/><rect x="14" y="492" width="1.6" height="1.6" fill="#555"/><text x="0" y="0" transform="translate(19.3 508.20) rotate(-90)" text-anchor="middle" font-family="Liberation Sans" font-size="12.5" fill="#444">5</text><rect x="14" y="521" width="1.6" height="1.6" fill="#555"/><rect x="12" y="536.40" width="6" height="1.2" fill="#444"/><rect x="14" y="550" width="1.6" height="1.6" fill="#555"/><text x="0" y="0" transform="translate(19.3 566.10) rotate(-90)" text-anchor="middle" font-family="Liberation Sans" font-size="12.5" fill="#444">6</text><rect x="14" y="579" width="1.6" height="1.6" fill="#555"/><rect x="12" y="594.40" width="6" height="1.2" fill="#444"/><rect x="14" y="608" width="1.6" height="1.6" fill="#555"/><text x="0" y="0" transform="translate(19.3 624.00) rotate(-90)" text-anchor="middle" font-family="Liberation Sans" font-size="12.5" fill="#444">7</text><rect x="14" y="637" width="1.6" height="1.6" fill="#555"/><rect x="12" y="652.40" width="6" height="1.2" fill="#444"/><rect x="14" y="666" width="1.6" height="1.6" fill="#555"/><text x="0" y="0" transform="translate(19.3 681.90) rotate(-90)" text-anchor="middle" font-family="Liberation Sans" font-size="12.5" fill="#444">8</text><rect x="14" y="695" width="1.6" height="1.6" fill="#555"/><rect x="12" y="709.40" width="6" height="1.2" fill="#444"/><rect x="14" y="724" width="1.6" height="1.6" fill="#555"/><text x="0" y="0" transform="translate(19.3 739.80) rotate(-90)" text-anchor="middle" font-family="Liberation Sans" font-size="12.5" fill="#444">9</text><rect x="14" y="753" width="1.6" height="1.6" fill="#555"/><rect x="12" y="767.40" width="6" height="1.2" fill="#444"/><rect x="14" y="782" width="1.6" height="1.6" fill="#555"/><text x="0" y="0" transform="translate(19.3 797.70) rotate(-90)" text-anchor="middle" font-family="Liberation Sans" font-size="12.5" fill="#444">10</text><rect x="14" y="811" width="1.6" height="1.6" fill="#555"/><rect x="12" y="825.40" width="6" height="1.2" fill="#444"/><rect x="14" y="840" width="1.6" height="1.6" fill="#555"/><text x="0" y="0" transform="translate(19.3 855.60) rotate(-90)" text-anchor="middle" font-family="Liberation Sans" font-size="12.5" fill="#444">11</text><rect x="14" y="869" width="1.6" height="1.6" fill="#555"/><rect x="12" y="883.40" width="6" height="1.2" fill="#444"/><rect x="14" y="898" width="1.6" height="1.6" fill="#555"/><text x="0" y="0" transform="translate(19.3 913.50) rotate(-90)" text-anchor="middle" font-family="Liberation Sans" font-size="12.5" fill="#444">12</text><rect x="14" y="927" width="1.6" height="1.6" fill="#555"/><rect x="12" y="941.40" width="6" height="1.2" fill="#444"/><rect x="14" y="956" width="1.6" height="1.6" fill="#555"/><text x="0" y="0" transform="translate(19.3 971.40) rotate(-90)" text-anchor="middle" font-family="Liberation Sans" font-size="12.5" fill="#444">13</text><rect x="14" y="984" width="1.6" height="1.6" fill="#555"/></svg>
<div class="a" style="left:1900px;top:192px;width:19px;height:807px;background:#dadada"></div>
<div class="a" style="left:1900px;top:193px;width:19px;height:19px;background:#fff;border:1px solid #c6c6c6"></div>
<div class="a" style="left:1900px;top:978px;width:19px;height:19px;background:#fff;border:1px solid #c6c6c6"></div>
<div class="a" style="left:1900px;top:274px;width:19px;height:336px;background:#fff;border:1px solid #a6a6a6"></div>
<svg class="a" style="left:1900px;top:190px" width="20" height="810"><path d="M5 15h9l-4.5-4.5z" fill="#666"/><path d="M5 794h9l-4.5 4.5z" fill="#666"/></svg>
<div class="a" style="left:1622px;top:1000px;width:42px;height:27px;background:#c6c6c6"></div>
<svg class="a" style="left:0;top:998px" width="1920" height="30"><path d="M268.5 8.5h7v12h-7z" fill="none" stroke="#666" stroke-width="1"/><path d="M275.5 8.5v12" stroke="#666"/><path d="M279 9l5 5 M284 9l-5 5" stroke="#666" stroke-width="1.2"/><path d="M276 20.5h8v-5" fill="none" stroke="#666"/><rect x="1393" y="6.2" width="18.6" height="12.4" rx="1.2" fill="#505050"/><rect x="1397" y="21.6" width="5" height="1.6" fill="#505050"/><path d="M1410.40 18.43 L1411.76 18.67 L1411.76 19.93 L1410.40 20.17 L1409.88 21.44 L1410.67 22.57 L1409.77 23.47 L1408.64 22.68 L1407.37 23.20 L1407.13 24.56 L1405.87 24.56 L1405.63 23.20 L1404.36 22.68 L1403.23 23.47 L1402.33 22.57 L1403.12 21.44 L1402.60 20.17 L1401.24 19.93 L1401.24 18.67 L1402.60 18.43 L1403.12 17.16 L1402.33 16.03 L1403.23 15.13 L1404.36 15.92 L1405.63 15.40 L1405.87 14.04 L1407.13 14.04 L1407.37 15.40 L1408.64 15.92 L1409.77 15.13 L1410.67 16.03 L1409.88 17.16 Z" fill="#505050" stroke="#f3f3f3" stroke-width="1.2" paint-order="stroke"/><circle cx="1406.5" cy="19.3" r="1.6" fill="#f3f3f3"/><path d="M1592.5 7.5h7.5l0.8 1 0.8-1h7.5v12h-7.5l-0.8 1-0.8-1h-7.5z" fill="none" stroke="#666" stroke-width="1.1"/><path d="M1600.8 8v13.5" stroke="#666" stroke-width="1.2"/><path d="M1599.2 20l1.6 2 1.6-2z" fill="#666"/><rect x="1594" y="10" width="4" height="1" fill="#666"/><rect x="1603" y="10" width="4" height="1" fill="#666"/><rect x="1600" y="10" width="1.6" height="1" fill="#666"/><rect x="1594" y="12" width="4" height="1" fill="#666"/><rect x="1603" y="12" width="4" height="1" fill="#666"/><rect x="1600" y="12" width="1.6" height="1" fill="#666"/><rect x="1594" y="14" width="4" height="1" fill="#666"/><rect x="1603" y="14" width="4" height="1" fill="#666"/><rect x="1600" y="14" width="1.6" height="1" fill="#666"/><rect x="1594" y="16" width="4" height="1" fill="#666"/><rect x="1603" y="16" width="4" height="1" fill="#666"/><rect x="1600" y="16" width="1.6" height="1" fill="#666"/><rect x="1634.5" y="7.5" width="16" height="15" fill="none" stroke="#666" stroke-width="1.1"/><rect x="1636.5" y="10" width="12" height="1.2" fill="#666"/><rect x="1636.5" y="13" width="12" height="1.2" fill="#666"/><rect x="1636.5" y="16" width="12" height="1.2" fill="#666"/><rect x="1636.5" y="19" width="12" height="1.2" fill="#666"/><path d="M1677.5 20.5v-12.5h13.5v5 M1677.5 20.5h8" fill="none" stroke="#666" stroke-width="1.1"/><rect x="1679.5" y="11" width="9" height="1" fill="#666"/><rect x="1679.5" y="13" width="9" height="1" fill="#666"/><rect x="1679.5" y="15" width="9" height="1" fill="#666"/><rect x="1679.5" y="17" width="9" height="1" fill="#666"/><circle cx="1689.6" cy="18.4" r="4.6" fill="#666" stroke="#f3f3f3" stroke-width="1.1"/><path d="M1686.2 16.3 q1.5 -0.3 2.6 1.2 q0.6 1.5 -0.6 2.3 M1690.3 14.6 q1.3 1 2.6 0.6 M1690.6 21.5 q1.3 -1.6 2.8 -1.2" stroke="#f3f3f3" stroke-width="1" fill="none"/><rect x="1711" y="14" width="10.5" height="1.6" fill="#555"/><rect x="1725.5" y="14.5" width="123.5" height="1" fill="#999"/><rect x="1787.5" y="8" width="6.5" height="14" fill="#666"/><rect x="1853.8" y="14" width="10.6" height="1.6" fill="#555"/><rect x="1858.3" y="9.8" width="1.6" height="10.6" fill="#555"/></svg>
<div class="a" style="left:871.00px;top:8px;font-size:15px;line-height:17px;letter-spacing:0.043px;color:#fff;">для презентации  -  Word</div>
<div class="a" style="left:1637.50px;top:8px;font-size:15px;line-height:17px;letter-spacing:-0.333px;color:#2b579a;">Вход</div>
<div class="a" style="left:18.00px;top:50px;font-size:15px;line-height:17px;letter-spacing:0.000px;color:#fff;">Файл</div>
<div class="a" style="left:87.00px;top:50px;font-size:15px;line-height:17px;letter-spacing:0.000px;color:#2b579a;">Главная</div>
<div class="a" style="left:170.50px;top:50px;font-size:15px;line-height:17px;letter-spacing:-0.533px;color:#fff;">Вставка</div>
<div class="a" style="left:250.25px;top:50px;font-size:15px;line-height:17px;letter-spacing:0.200px;color:#fff;">Конструктор</div>
<div class="a" style="left:364.00px;top:50px;font-size:15px;line-height:17px;letter-spacing:0.000px;color:#fff;">Макет</div>
<div class="a" style="left:432.75px;top:50px;font-size:15px;line-height:17px;letter-spacing:-0.000px;color:#fff;">Ссылки</div>
<div class="a" style="left:511.50px;top:50px;font-size:15px;line-height:17px;letter-spacing:-0.286px;color:#fff;">Рассылки</div>
<div class="a" style="left:603.50px;top:50px;font-size:15px;line-height:17px;letter-spacing:0.231px;color:#fff;">Рецензирование</div>
<div class="a" style="left:748.50px;top:50px;font-size:15px;line-height:17px;letter-spacing:-0.500px;color:#fff;">Вид</div>
<div class="a" style="left:801.50px;top:50px;font-size:15px;line-height:17px;letter-spacing:0.111px;color:#fff;">Надстройки</div>
<div class="a" style="left:911.00px;top:50px;font-size:15px;line-height:17px;letter-spacing:-0.167px;color:#fff;">Справка</div>
<div class="a" style="left:1028.50px;top:50px;font-size:15px;line-height:17px;letter-spacing:-0.238px;color:#e9edf4;">Что вы хотите сделать?</div>
<div class="a" style="left:1739.00px;top:51px;font-size:15px;line-height:17px;letter-spacing:-0.091px;color:#fff;">Общий доступ</div>
<div class="a" style="left:14.00px;top:128px;font-size:15px;line-height:17px;letter-spacing:-0.429px;color:#262626;">Вставить</div>
<div class="a" style="left:106.00px;top:87px;font-size:15px;line-height:17px;letter-spacing:-0.029px;color:#a6a6a6;">Вырезать</div>
<div class="a" style="left:106.00px;top:114.5px;font-size:15px;line-height:17px;letter-spacing:0.444px;color:#a6a6a6;">Копировать</div>
<div class="a" style="left:107.00px;top:142.6px;font-size:15px;line-height:17px;letter-spacing:0.212px;color:#262626;">Формат по образцу</div>
<div class="a" style="left:76.75px;top:174px;font-size:12.5px;line-height:14px;letter-spacing:0.182px;color:#2a2a2a;">Буфер обмена</div>
<div class="a" style="left:400.00px;top:174.2px;font-size:12.5px;line-height:14px;letter-spacing:0.100px;color:#2a2a2a;">Шрифт</div>
<div class="a" style="left:715.00px;top:174.3px;font-size:12.5px;line-height:14px;letter-spacing:0.250px;color:#2a2a2a;">Абзац</div>
<div class="a" style="left:1286.50px;top:174px;font-size:12.5px;line-height:14px;letter-spacing:-0.650px;color:#2a2a2a;">Стили</div>
<div class="a" style="left:1758.00px;top:174px;font-size:12.5px;line-height:14px;letter-spacing:0.138px;color:#2a2a2a;">Редактирование</div>
<div class="a" style="left:276.50px;top:97px;font-size:15px;line-height:17px;letter-spacing:0.150px;color:#262626;">Arial</div>
<div class="a" style="left:384.00px;top:97px;font-size:15px;line-height:17px;letter-spacing:-1.067px;color:#262626;">16.5</div>
<div class="a" style="left:903.75px;top:132.4px;font-size:15px;line-height:17px;letter-spacing:-0.125px;color:#595959;">¶ Обычный</div>
<div class="a" style="left:996.25px;top:132.4px;font-size:15px;line-height:17px;letter-spacing:-0.109px;color:#595959;">¶ Без инт...</div>
<div class="a" style="left:1085.00px;top:132.4px;font-size:15px;line-height:17px;letter-spacing:-0.060px;color:#595959;">Заголово...</div>
<div class="a" style="left:1175.00px;top:132.4px;font-size:15px;line-height:17px;letter-spacing:-0.080px;color:#595959;">Заголово...</div>
<div class="a" style="left:1266.00px;top:132.4px;font-size:15px;line-height:17px;letter-spacing:0.350px;color:#595959;">Заголовок</div>
<div class="a" style="left:1353.50px;top:132.4px;font-size:15px;line-height:17px;letter-spacing:0.080px;color:#595959;">Подзагол...</div>
<div class="a" style="left:1445.25px;top:132.4px;font-size:15px;line-height:17px;letter-spacing:-0.240px;color:#595959;">Слабое в...</div>
<div class="a" style="left:1533.50px;top:132.4px;font-size:15px;line-height:17px;letter-spacing:-0.075px;color:#595959;">Выделение</div>
<div class="a" style="left:1627.00px;top:132.4px;font-size:15px;line-height:17px;letter-spacing:-0.200px;color:#595959;">Сильное...</div>
<div class="a" style="left:1777.50px;top:86.2px;font-size:15px;line-height:17px;letter-spacing:0.200px;color:#262626;">Найти</div>
<div class="a" style="left:1778.50px;top:113.3px;font-size:15px;line-height:17px;letter-spacing:-0.143px;color:#262626;">Заменить</div>
<div class="a" style="left:1777.50px;top:140.4px;font-size:15px;line-height:17px;letter-spacing:-0.286px;color:#262626;">Выделить</div>
<div class="a" style="left:7.00px;top:1006.3px;font-size:13.5px;line-height:15px;letter-spacing:-0.343px;color:#444;">Страница 1 из 1</div>
<div class="a" style="left:150.50px;top:1006.3px;font-size:13.5px;line-height:15px;letter-spacing:-0.329px;color:#444;">Число слов: 187</div>
<div class="a" style="left:302.50px;top:1006.3px;font-size:13.5px;line-height:15px;letter-spacing:-0.267px;color:#444;">русский</div>
<div class="a" style="left:1414.00px;top:1006.1px;font-size:13.5px;line-height:15px;letter-spacing:-0.190px;color:#444;">Параметры отображения</div>
<div class="a" style="left:1876.00px;top:1006.1px;font-size:13.5px;line-height:15px;letter-spacing:-0.750px;color:#444;">122 %</div>

</div>
</body></html>
